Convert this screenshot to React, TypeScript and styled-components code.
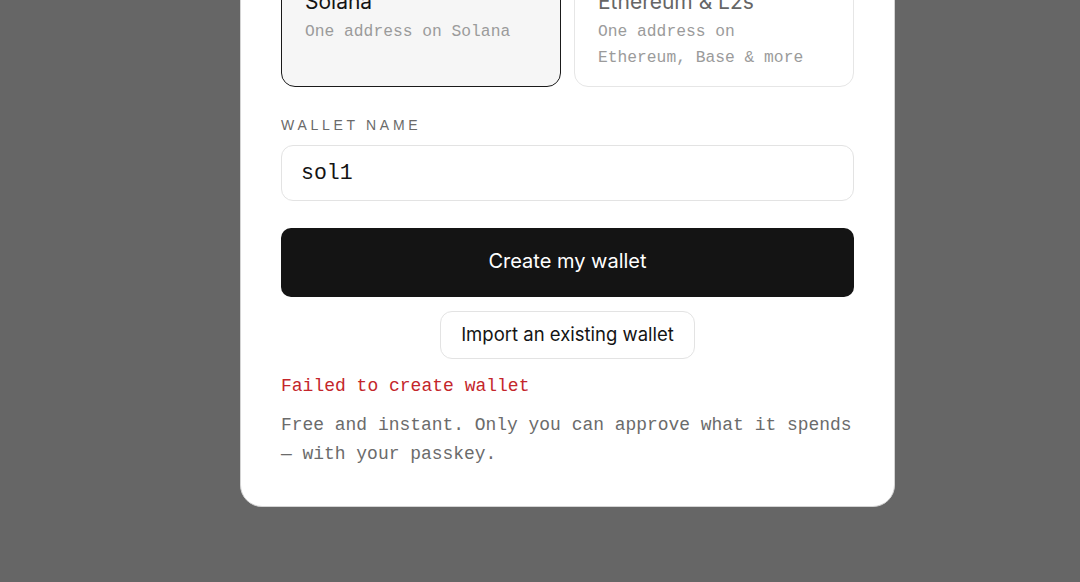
import React, { useState } from 'react';
import styled, { createGlobalStyle } from 'styled-components';

const GlobalStyle = createGlobalStyle`
  * { box-sizing: border-box; }
  html, body { margin: 0; padding: 0; }
  body {
    background: #666666;
    font-family: Inter, "Liberation Sans", sans-serif;
    -webkit-font-smoothing: antialiased;
  }
`;

const SANS = `Inter, "Liberation Sans", sans-serif`;
const MONO = `"Liberation Mono", "DejaVu Sans Mono", monospace`;

const Overlay = styled.div`
  height: 100vh;
  overflow: hidden;
  display: flex;
  flex-direction: column;
  justify-content: flex-end;
  align-items: flex-start;
  padding: 0 0 75px 240px;
`;

const Card = styled.div`
  width: 655px;
  flex-shrink: 0;
  background: #ffffff;
  border: 1px solid #d4d4d4;
  border-radius: 22px;
  padding: 40px 40px 37px;
  display: flex;
  flex-direction: column;
`;

const OptionGrid = styled.div`
  display: grid;
  grid-template-columns: 1fr 1fr;
  gap: 13px;
  margin-bottom: 28px;
`;

const Option = styled.button<{ $selected: boolean }>`
  text-align: left;
  padding: 18px 22px 15px 23px;
  border-radius: 14px;
  border: 1.5px solid ${({ $selected }) => ($selected ? '#1a1a1a' : '#e6e6e6')};
  background: ${({ $selected }) => ($selected ? '#f6f6f6' : '#ffffff')};
  cursor: pointer;
  display: flex;
  flex-direction: column;
`;

const OptionTitle = styled.span<{ $selected: boolean }>`
  font-family: ${SANS};
  font-size: 21px;
  line-height: 28px;
  margin-bottom: 3px;
  color: ${({ $selected }) => ($selected ? '#141414' : '#666666')};
`;

const OptionSub = styled.span`
  font-family: ${MONO};
  font-size: 16.3px;
  line-height: 26px;
  color: #9b9b9b;
`;

const Label = styled.label`
  font-family: "Liberation Sans", Arial, sans-serif;
  font-size: 14px;
  line-height: 20px;
  letter-spacing: 3.7px;
  text-transform: uppercase;
  color: #6a6a6a;
  margin-bottom: 10px;
`;

const NameInput = styled.input`
  height: 56px;
  width: 100%;
  border: 1.5px solid #e3e3e3;
  border-radius: 12px;
  padding: 0 19px;
  font-family: ${MONO};
  font-size: 21.5px;
  color: #141414;
  background: #fff;
  outline: none;
`;

const PrimaryButton = styled.button`
  margin-top: 27px;
  height: 69px;
  width: 100%;
  border: none;
  border-radius: 10px;
  background: #141414;
  color: #ffffff;
  font-family: ${SANS};
  font-size: 20px;
  padding: 0 0 4px;
  cursor: pointer;
`;

const SecondaryButton = styled.button`
  margin-top: 14px;
  align-self: center;
  height: 48px;
  padding: 0 20px 2px;
  border: 1.5px solid #e3e3e3;
  border-radius: 12px;
  background: #ffffff;
  color: #141414;
  font-family: ${SANS};
  font-size: 18.5px;
  cursor: pointer;
`;

const ErrorText = styled.p`
  margin: 14px 0 0;
  font-family: ${MONO};
  font-size: 18px;
  line-height: 27px;
  color: #c4262b;
`;

const Footnote = styled.p`
  margin: 11px 0 0;
  font-family: ${MONO};
  font-size: 17.95px;
  line-height: 29px;
  color: #6b6b6b;
`;

const networks = [
  { id: 'solana', title: 'Solana', sub: 'One address on Solana' },
  { id: 'evm', title: 'Ethereum & L2s', sub: 'One address on Ethereum, Base & more' },
];

export default function App() {
  const [network, setNetwork] = useState('solana');
  const [name, setName] = useState('sol1');

  return (
    <>
      <GlobalStyle />
      <Overlay>
        <Card>
          <OptionGrid>
            {networks.map((n) => (
              <Option key={n.id} $selected={network === n.id} onClick={() => setNetwork(n.id)}>
                <OptionTitle $selected={network === n.id}>{n.title}</OptionTitle>
                <OptionSub>{n.sub}</OptionSub>
              </Option>
            ))}
          </OptionGrid>
          <Label htmlFor="wallet-name">Wallet name</Label>
          <NameInput id="wallet-name" value={name} onChange={(e) => setName(e.target.value)} />
          <PrimaryButton>Create my wallet</PrimaryButton>
          <SecondaryButton>Import an existing wallet</SecondaryButton>
          <ErrorText>Failed to create wallet</ErrorText>
          <Footnote>
            Free and instant. Only you can approve what it spends<br />— with your passkey.
          </Footnote>
        </Card>
      </Overlay>
    </>
  );
}
